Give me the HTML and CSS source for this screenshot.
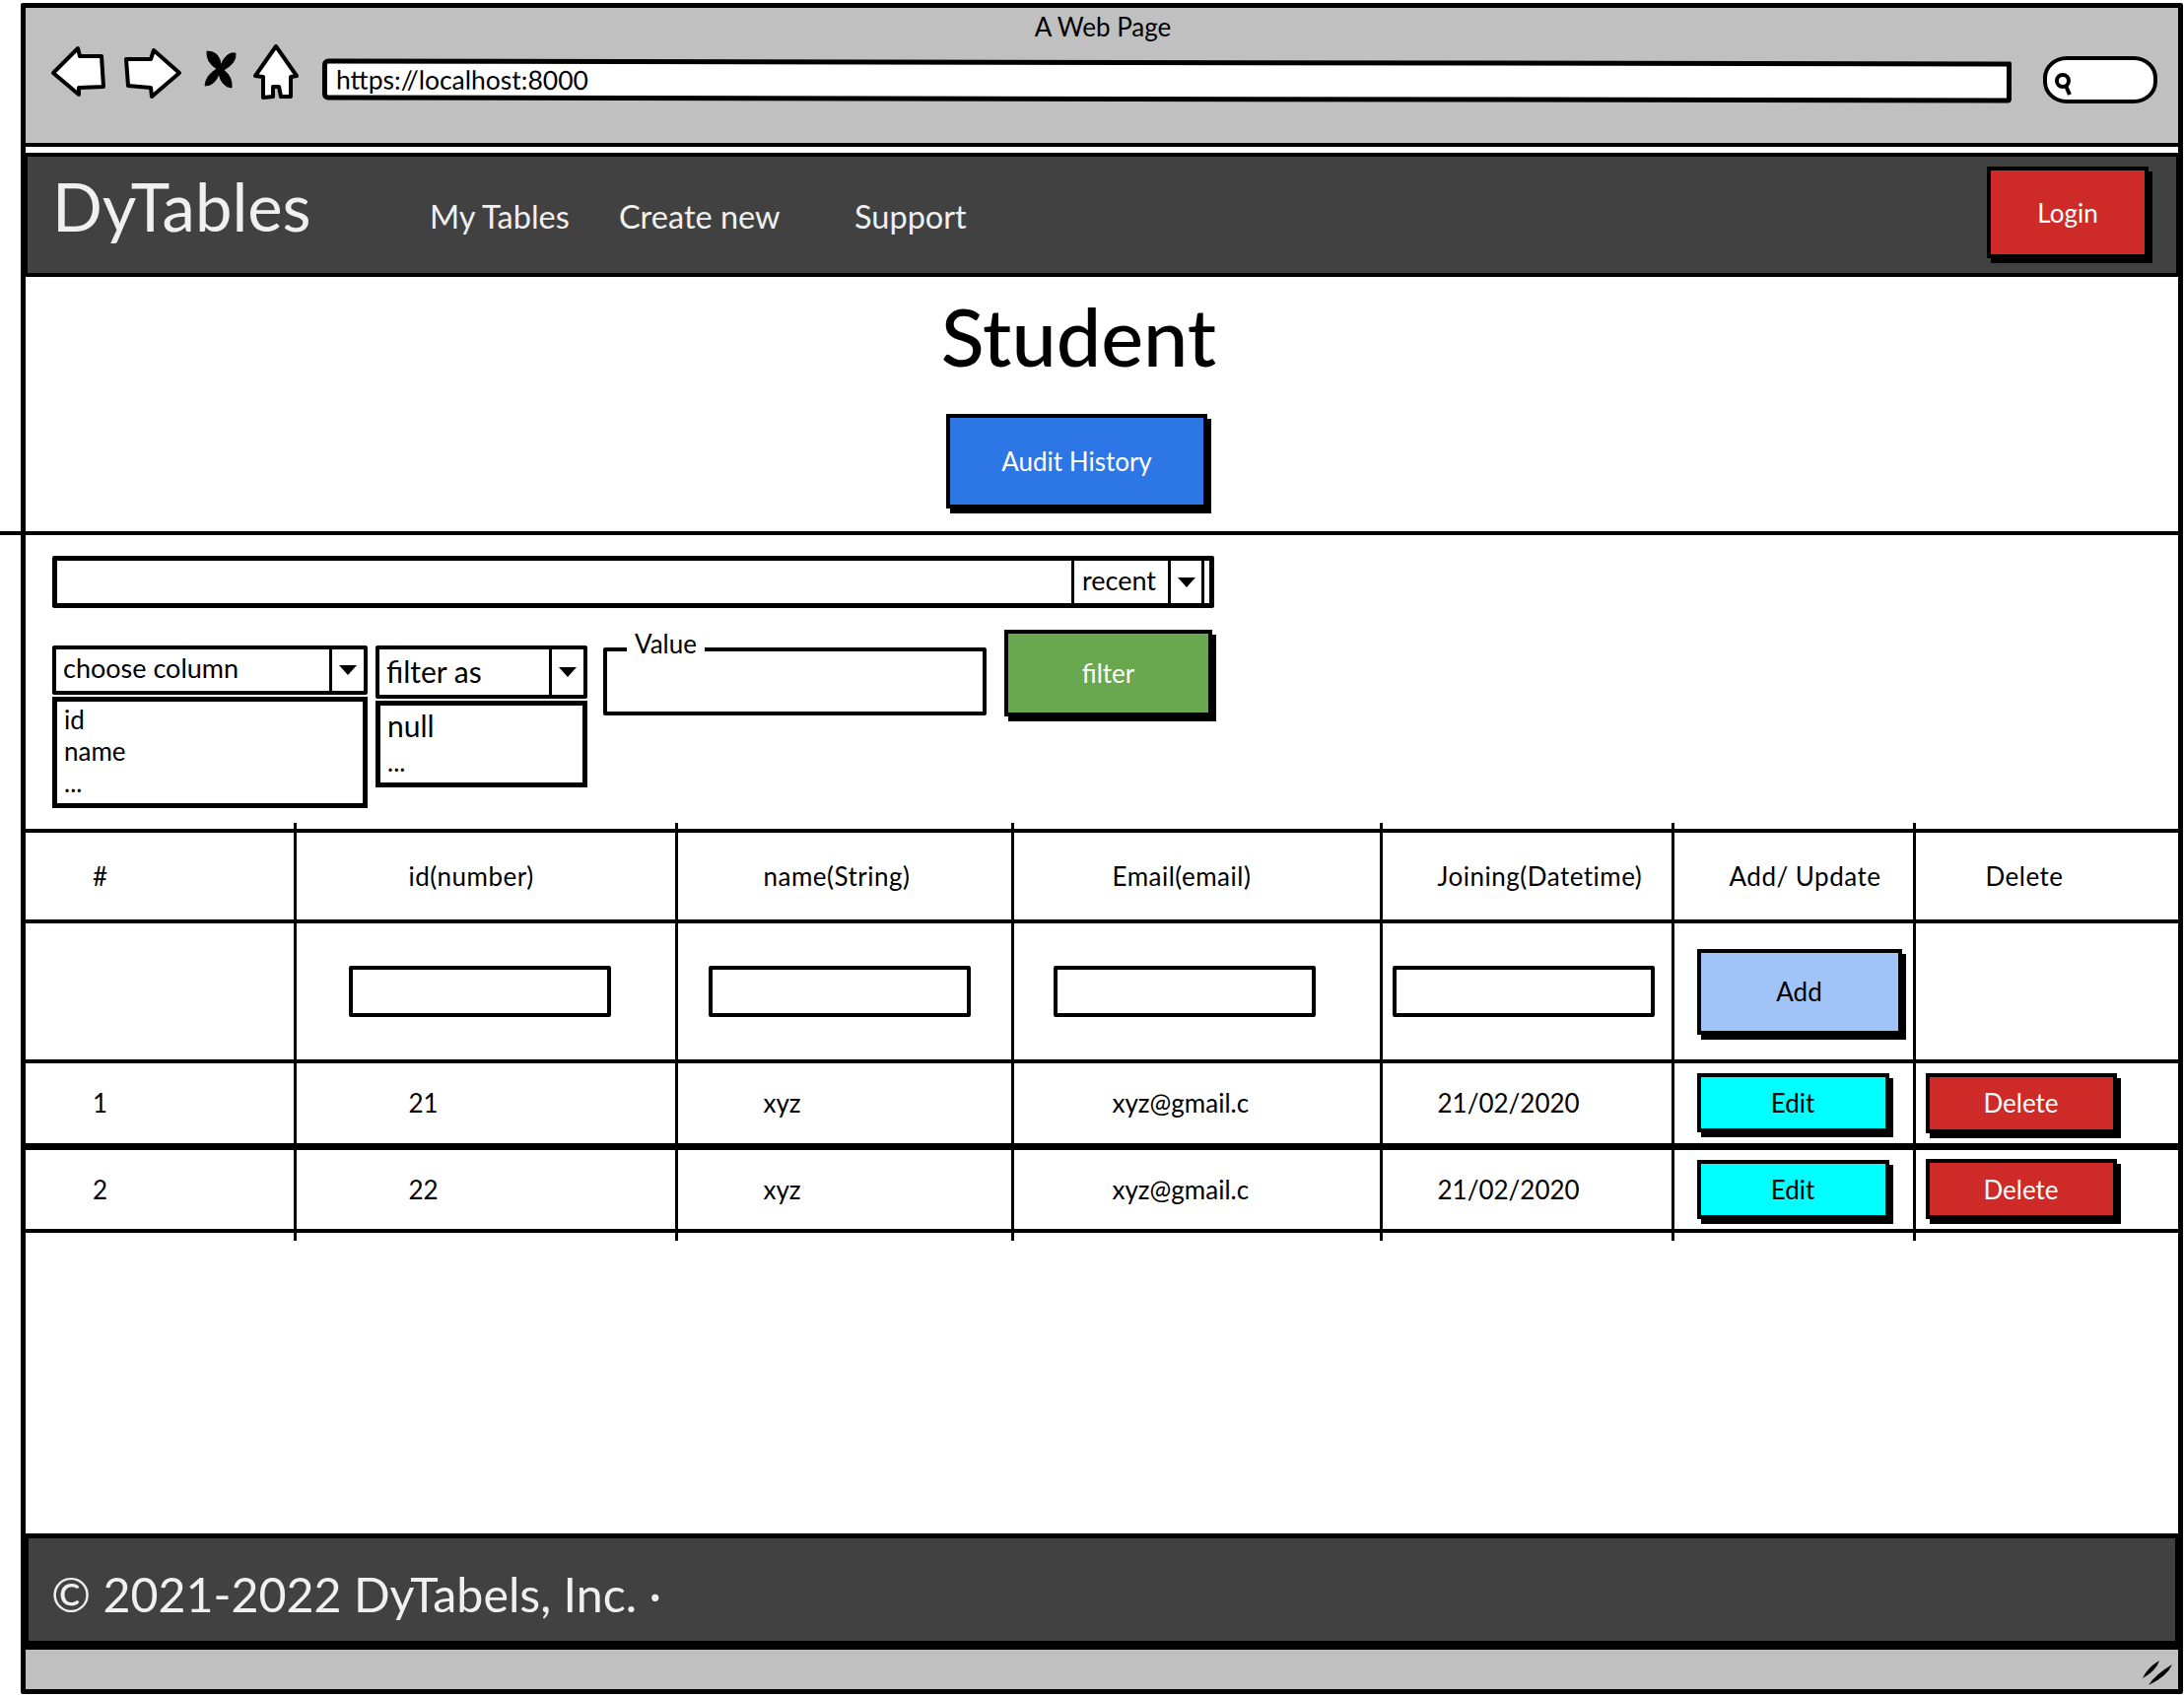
FILE: index.html
```html
<!DOCTYPE html>
<html lang="en">
<head>
    <meta charset="UTF-8">
    <title>DyTables - Student</title>
    <link rel="stylesheet" href="styles.css">
</head>
<body>

<div class="window">
    <div class="chrome">
        <div class="chrome-title">A Web Page</div>
        <div class="toolbar">
            <svg class="tool back" viewBox="20 14 60 58"><path d="M24 44 L49 19 L51 27 L73 27 L75 58 L50 59 L50 66 Z"/></svg>
            <svg class="tool forward" viewBox="94 14 62 58"><path d="M98 30 L123 30 L126 21 L152 44 L124 68 L123 59 L100 57 Z"/></svg>
            <svg class="tool stop" viewBox="175 14 38 58"><path class="solid" d="M180 22 Q193 22 194 36 Q200 22 209 24 Q210 34 197 41 Q206 48 205 59 Q195 58 192 45 Q188 57 178 57 Q179 46 190 40 Q179 33 180 22 Z"/></svg>
            <svg class="tool home" viewBox="226 14 48 58"><path d="M250 17 L271 47 L265 48 L265 68 L255 68 L253 58 L247 58 L247 68 L237 69 L237 48 L229 47 Z"/></svg>
            <div class="url-bar">https://localhost:8000</div>
            <div class="search-pill">
                <svg class="search-glass" viewBox="0 0 20 26"><circle cx="9" cy="10" r="6"/><path d="M12 15 L16 24"/></svg>
            </div>
        </div>
    </div>

    <nav class="navbar">
        <div class="brand">DyTables</div>
        <a class="nav-link my-tables">My Tables</a>
        <a class="nav-link create-new">Create new</a>
        <a class="nav-link support">Support</a>
        <button class="btn btn-red login">Login</button>
    </nav>

    <main class="content">
        <h1 class="page-title">Student</h1>
        <button class="btn btn-blue audit">Audit History</button>
        <div class="divider"></div>

        <div class="search-row">
            <div class="sort-select">
                <span class="sort-value">recent</span>
                <span class="caret-box"><i class="caret"></i></span>
            </div>
        </div>

        <div class="filter-row">
            <div class="select column-select">
                <div class="select-head">
                    <span class="select-value">choose column</span>
                    <span class="caret-box"><i class="caret"></i></span>
                </div>
                <ul class="select-list">
                    <li>id</li>
                    <li>name</li>
                    <li class="more">...</li>
                </ul>
            </div>
            <div class="select filter-select">
                <div class="select-head">
                    <span class="select-value">filter as</span>
                    <span class="caret-box"><i class="caret"></i></span>
                </div>
                <ul class="select-list">
                    <li>null</li>
                    <li class="more">...</li>
                </ul>
            </div>
            <fieldset class="value-box">
                <legend>Value</legend>
            </fieldset>
            <button class="btn btn-green filter-btn">filter</button>
        </div>

        <table class="data-table">
            <colgroup>
                <col class="w-num"><col class="w-id"><col class="w-name"><col class="w-email">
                <col class="w-date"><col class="w-action"><col class="w-delete">
            </colgroup>
            <thead>
                <tr>
                    <th>#</th>
                    <th>id(number)</th>
                    <th>name(String)</th>
                    <th>Email(email)</th>
                    <th>Joining(Datetime)</th>
                    <th>Add/ Update</th>
                    <th>Delete</th>
                </tr>
            </thead>
            <tbody>
                <tr class="add-row">
                    <td></td>
                    <td><div class="cell-input"></div></td>
                    <td><div class="cell-input"></div></td>
                    <td><div class="cell-input"></div></td>
                    <td><div class="cell-input"></div></td>
                    <td><button class="btn btn-light add">Add</button></td>
                    <td></td>
                </tr>
                <tr class="data-row">
                    <td>1</td>
                    <td>21</td>
                    <td>xyz</td>
                    <td>xyz@gmail.c</td>
                    <td>21/02/2020</td>
                    <td><button class="btn btn-cyan edit">Edit</button></td>
                    <td><button class="btn btn-red delete">Delete</button></td>
                </tr>
                <tr class="data-row">
                    <td>2</td>
                    <td>22</td>
                    <td>xyz</td>
                    <td>xyz@gmail.c</td>
                    <td>21/02/2020</td>
                    <td><button class="btn btn-cyan edit">Edit</button></td>
                    <td><button class="btn btn-red delete">Delete</button></td>
                </tr>
            </tbody>
        </table>
    </main>

    <footer class="footer">&copy; 2021-2022 DyTabels, Inc. &middot;</footer>

    <div class="status-bar">
        <svg class="resize" viewBox="0 0 32 26"><path d="M1 19 Q6 8 18 1 Q15 11 1 19 Z M7 26 Q14 15 31 5 Q26 17 7 26 Z"/></svg>
    </div>
</div>

</body>
</html>
```

FILE: styles.css
```css
* {
    box-sizing: border-box;
}
body {
    margin: 0;
    background-color: white;
    font-family: Lato, "Open Sans", sans-serif;
    color: black;
}
.window {
    width: 2194px;
    height: 1716px;
    margin: 3px 0 0 21px;
    border: 5px solid black;
    border-radius: 2px;
    display: flex;
    flex-direction: column;
}

/* browser chrome */
.chrome {
    height: 141px;
    flex: none;
    background-color: #c0c0c0;
    border-bottom: 4px solid black;
}
.chrome-title {
    height: 36px;
    padding-top: 5px;
    text-align: center;
    font-size: 26px;
    line-height: 28px;
    margin-left: 2px;
}
.toolbar {
    display: flex;
    align-items: flex-start;
    padding-left: 24px;
}
.tool {
    height: 58px;
    flex: none;
}
.tool path {
    fill: white;
    stroke: black;
    stroke-width: 4;
    stroke-linejoin: round;
}
.tool path.solid {
    fill: black;
    stroke-width: 1;
}
.back { width: 60px; }
.forward { width: 62px; margin-left: 14px; }
.stop { width: 38px; margin-left: 19px; }
.home { width: 48px; margin-left: 13px; }
.url-bar {
    width: 1714px;
    height: 42px;
    margin: 17px 0 0 23px;
    padding-left: 9px;
    background-color: white;
    border: 5px solid black;
    border-radius: 6px 2px 4px 6px;
    font-size: 26.5px;
    line-height: 32px;
    transform: rotate(0.1deg);
}
.search-pill {
    width: 116px;
    height: 48px;
    margin: 13px 0 0 32px;
    padding: 11px 0 0 7px;
    background-color: white;
    border: 4px solid black;
    border-radius: 24px / 22px;
}
.search-glass {
    display: block;
    width: 20px;
    height: 26px;
    fill: none;
    stroke: black;
    stroke-width: 4;
}

/* top nav */
.navbar {
    height: 126px;
    flex: none;
    margin: 6px -2px 0 -2px;
    padding-left: 25px;
    display: flex;
    align-items: flex-start;
    background-color: #414141;
    border: 4px solid black;
    color: #f0f0f0;
}
.brand {
    font-size: 67px;
    line-height: 76px;
    margin-top: 12px;
    width: 383px;
}
.nav-link {
    font-size: 32.5px;
    line-height: 40px;
    margin-top: 41px;
}
.my-tables { width: 192px; }
.create-new { width: 239px; }
.support { width: 1149px; }

/* buttons */
.btn {
    display: block;
    padding: 0;
    border: 4px solid black;
    box-shadow: 4px 5px 0 black;
    font-family: inherit;
    font-size: 26px;
    color: white;
}
.btn-red { background-color: #cd2a28; }
.btn-blue { background-color: #2d76e6; }
.btn-green { background-color: #69a84f; }
.btn-light { background-color: #a0c4f8; color: black; }
.btn-cyan { background-color: #00ffff; color: black; }
.login {
    width: 164px;
    height: 93px;
    margin-top: 10px;
}
.audit {
    width: 265px;
    height: 96px;
    margin: 0 0 23px 934px;
}

/* main */
.content {
    flex: 1;
}
.page-title {
    margin: 0 0 0 -47px;
    padding-top: 12px;
    height: 139px;
    text-align: center;
    font-size: 81px;
    line-height: 96px;
    font-weight: 500;
}
.divider {
    height: 4px;
    margin: 0 -2px 0 -26px;
    background-color: black;
}
.search-row {
    height: 53px;
    width: 1179px;
    margin: 21px 0 0 27px;
    padding-right: 5px;
    display: flex;
    justify-content: flex-end;
    border: 5px solid black;
    border-radius: 2px;
}
.sort-select {
    width: 135px;
    display: flex;
    border-left: 3px solid black;
    font-size: 27px;
    line-height: 40px;
}
.sort-value {
    flex: 1;
    padding-left: 8px;
}
.caret-box {
    display: flex;
    align-items: center;
    justify-content: center;
    flex: none;
    width: 35px;
    border-left: 3px solid black;
    border-right: 3px solid black;
}
.sort-select .caret-box {
    width: 37px;
}
.caret {
    width: 0;
    height: 0;
    border-left: 9px solid transparent;
    border-right: 9px solid transparent;
    border-top: 10px solid black;
}

/* filter row */
.filter-row {
    display: flex;
    align-items: flex-start;
    height: 202px;
    margin: 22px 0 0 27px;
}
.select {
    margin-top: 16px;
    flex: none;
}
.select-head {
    display: flex;
    border: 4px solid black;
    border-radius: 2px;
}
.select-value {
    flex: 1;
    padding-left: 7px;
}
.select-head .caret-box {
    border-right: 0;
}
.select-list {
    list-style: none;
    margin: 2px 0 0;
    padding: 0 0 0 7px;
    border: 5px solid black;
}
.column-select {
    width: 320px;
}
.column-select .select-head {
    height: 50px;
    font-size: 27px;
    line-height: 37px;
}
.column-select .select-list {
    height: 113px;
    font-size: 26px;
    line-height: 32px;
    padding-top: 2px;
}
.filter-select {
    width: 215px;
    margin-left: 8px;
}
.filter-select .select-head {
    height: 54px;
    font-size: 30px;
    line-height: 44px;
}
.filter-select .select-list {
    height: 88px;
    font-size: 30px;
    line-height: 37px;
    padding-top: 2px;
}
.filter-select .more {
    font-size: 26px;
}
.value-box {
    width: 389px;
    height: 80px;
    margin: 7px 0 0 16px;
    padding: 0;
    border: 4px solid black;
    border-radius: 2px;
}
.value-box legend {
    margin-left: 20px;
    padding: 0 8px;
    font-size: 26px;
    line-height: 26px;
    transform: translateY(-6px);
}
.filter-btn {
    width: 211px;
    height: 88px;
    margin-left: 18px;
}

/* table */
.data-table {
    width: 2184px;
    table-layout: fixed;
    border-collapse: collapse;
    font-size: 26px;
}
.w-num { width: 273px; }
.w-id { width: 387px; }
.w-name { width: 341px; }
.w-email { width: 374px; }
.w-date { width: 296px; }
.w-action { width: 245px; }
.w-delete { width: 268px; }
.data-table th,
.data-table td {
    position: relative;
    padding: 0;
    font-weight: normal;
    text-align: left;
    border-top: 4px solid black;
    border-bottom: 4px solid black;
    border-left: 3px solid black;
}
.data-table th {
    letter-spacing: 0.5px;
}
.data-table th:first-child,
.data-table td:first-child {
    border-left: 0;
}
.data-table thead tr { height: 92px; }
.add-row { height: 142px; }
.data-row { height: 86px; }
.data-table tbody tr:last-child td {
    border-top-width: 7px;
}
.data-table tr > :nth-child(1) { padding-left: 68px; }
.data-table tr > :nth-child(2) { padding-left: 114px; }
.data-table tr > :nth-child(3) { padding-left: 87px; }
.data-table tr > :nth-child(4) { padding-left: 100px; }
.data-table tr > :nth-child(5) { padding-left: 56px; }
.data-table tr > :nth-child(6) { padding-left: 56px; }
.data-table tr > :nth-child(7) { padding-left: 71px; }
.data-table .add-row > :nth-child(2) { padding-left: 53px; }
.data-table .add-row > :nth-child(3) { padding-left: 31px; }
.data-table .add-row > :nth-child(4) { padding-left: 40px; }
.data-table .add-row > :nth-child(5) { padding-left: 10px; }
.data-table tbody > tr > :nth-child(6) { padding-left: 23px; }
.data-table tbody > tr > :nth-child(7) { padding-left: 10px; }
.data-table th:not(:first-child)::before {
    content: "";
    position: absolute;
    left: -3px;
    top: -10px;
    width: 3px;
    height: 10px;
    background-color: black;
}
.data-table tbody tr:last-child td:not(:first-child)::after {
    content: "";
    position: absolute;
    left: -3px;
    bottom: -12px;
    width: 3px;
    height: 12px;
    background-color: black;
}
.cell-input {
    width: 266px;
    height: 52px;
    border: 4px solid black;
    border-radius: 2px;
}
.add {
    width: 208px;
    height: 87px;
}
.edit {
    width: 195px;
    height: 60px;
}
.delete {
    width: 194px;
    height: 61px;
}

/* footer */
.footer {
    height: 118px;
    flex: none;
    margin: 0 -2px;
    padding: 5px 0 0 23px;
    background-color: #414141;
    border: 5px solid black;
    border-bottom-width: 9px;
    color: #f0f0f0;
    font-size: 48.3px;
    line-height: 102px;
}
.status-bar {
    height: 40px;
    flex: none;
    display: flex;
    align-items: flex-start;
    justify-content: flex-end;
    padding: 10px 5px 0 0;
    background-color: #c0c0c0;
}
.resize {
    width: 32px;
    height: 26px;
    fill: black;
}
```
